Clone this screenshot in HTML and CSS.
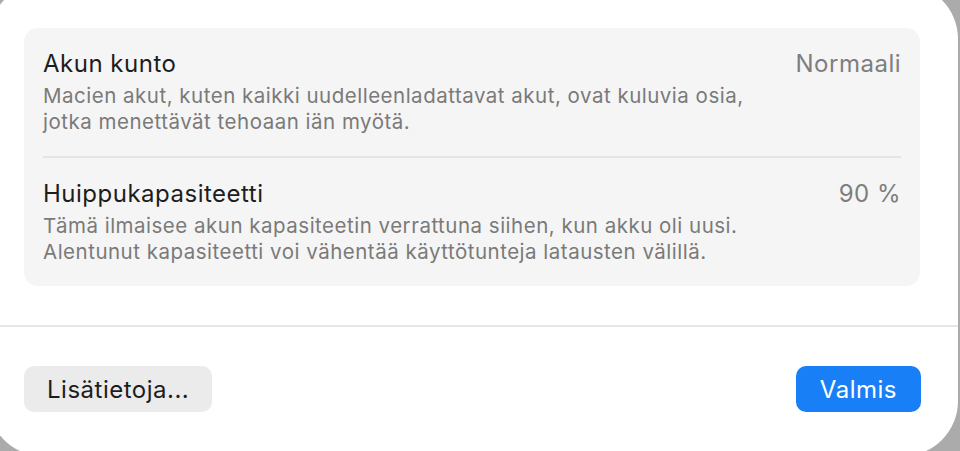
FILE: index.html
```html
<!DOCTYPE html>
<html lang="fi">
<head>
    <meta charset="UTF-8">
    <meta name="viewport" content="width=device-width, initial-scale=1.0">
    <title>Akun kunto</title>
    <link rel="stylesheet" href="styles.css">
</head>
<body>

<div class="window">
    <div class="content">
        <div class="group">
            <div class="row">
                <div class="row-text">
                    <div class="row-title">Akun kunto</div>
                    <div class="row-desc">Macien akut, kuten kaikki uudelleenladattavat akut, ovat kuluvia osia,<br>jotka menettävät tehoaan iän myötä.</div>
                </div>
                <div class="row-value">Normaali</div>
            </div>
            <div class="divider"></div>
            <div class="row">
                <div class="row-text">
                    <div class="row-title">Huippukapasiteetti</div>
                    <div class="row-desc">Tämä ilmaisee akun kapasiteetin verrattuna siihen, kun akku oli uusi.<br>Alentunut kapasiteetti voi vähentää käyttötunteja latausten välillä.</div>
                </div>
                <div class="row-value">90 %</div>
            </div>
        </div>
    </div>

    <div class="separator"></div>

    <div class="footer">
        <button class="btn">Lisätietoja...</button>
        <button class="btn btn-primary">Valmis</button>
    </div>
</div>

</body>
</html>
```

FILE: styles.css
```css
html, body {
    height: 100%;
}
body {
    font-family: Inter, "Noto Sans", sans-serif;
    background-color: #ababab;
    margin: 0;
    padding: 0;
    overflow: hidden;
}
.window {
    width: 970px;
    height: 472px;
    margin: -16px 0 0 -12px;
    background-color: #ffffff;
    border-radius: 55px;
    box-sizing: border-box;
    display: flex;
    flex-direction: column;
}
.content {
    padding: 44px 38px 0 36px;
}
.group {
    background-color: #f5f5f5;
    border-radius: 14px;
    padding: 0 19px;
}
.row {
    display: flex;
    justify-content: space-between;
    align-items: flex-start;
    padding: 22px 0 21px;
}
.row-title {
    font-size: 24px;
    line-height: 28px;
    letter-spacing: 0.5px;
    color: #1d1d1d;
}
.row-desc {
    margin-top: 5px;
    font-size: 20.5px;
    line-height: 26px;
    letter-spacing: 0.5px;
    color: #7a7a7a;
}
.row-value {
    font-size: 24px;
    line-height: 28px;
    letter-spacing: 0.5px;
    color: #7e7e7e;
}
.divider {
    height: 2px;
    background-color: #e4e4e4;
}
.separator {
    margin-top: 39px;
    height: 2px;
    background-color: #e6e6e6;
}
.footer {
    display: flex;
    justify-content: space-between;
    padding: 39px 37px 0 36px;
}
.btn {
    height: 46px;
    padding: 0 23px;
    font-family: inherit;
    font-size: 24px;
    letter-spacing: 0.5px;
    color: #1d1d1d;
    background-color: #ebebeb;
    border: none;
    border-radius: 10px;
}
.btn-primary {
    padding: 0 24px;
    color: #ffffff;
    background-color: #197ff7;
}
```
